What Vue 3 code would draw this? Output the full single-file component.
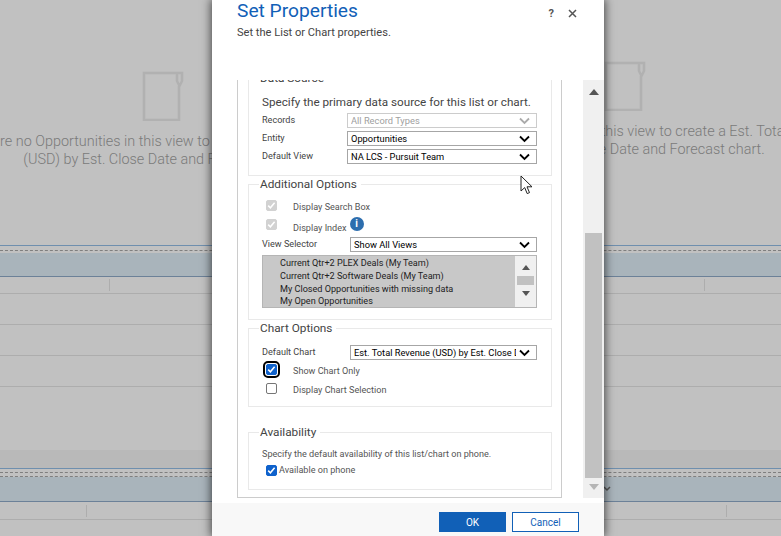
<script setup>
// Set Properties dialog over a dimmed dashboard
const views = [
  'Current Qtr+2 PLEX Deals (My Team)',
  'Current Qtr+2 Software Deals (My Team)',
  'My Closed Opportunities with missing data',
  'My Open Opportunities',
]
const sourceRows = [
  { label: 'Records', value: 'All Record Types', off: true },
  { label: 'Entity', value: 'Opportunities' },
  { label: 'Default View', value: 'NA LCS - Pursuit Team' },
]
const CHEVRON = 'M1 1.5 L5.5 6 L10 1.5'
const CHECK = 'M2.2 5.6 L4.4 7.8 L8.6 2.8'
</script>

<template>
  <div class="page">
    <div class="charts">
      <section class="empty left">
        <svg class="doc" width="42" height="50" viewBox="0 0 42 50">
          <path d="M35 2H2v47h35V15M35 2h5v8l-2.500 5-2.500-5z" />
        </svg>
        <p>There are no Opportunities in this view to create a Est. Total Revenue<br>(USD) by Est. Close Date and Forecast chart.</p>
      </section>
      <section class="empty right">
        <svg class="doc" width="42" height="50" viewBox="0 0 42 50">
          <path d="M35 2H2v47h35V15M35 2h5v8l-2.500 5-2.500-5z" />
        </svg>
        <p>There are no Opportunities in this view to create a Est. Total Revenue<br>(USD) by Est. Close Date and Forecast chart.</p>
      </section>
    </div>

    <div class="grid-head">
      <div class="dash"></div>
      <div class="band"></div>
    </div>
    <div class="row short"><i class="tick a"></i><i class="tick b"></i></div>
    <div class="row"></div>
    <div class="row"></div>
    <div class="row"></div>
    <div class="gap"></div>

    <div class="grid-head second">
      <div class="dash"></div>
      <div class="dash"></div>
      <div class="band">
        <svg width="8" height="6" viewBox="0 0 8 6"><path d="M1 1l3 3 3-3" /></svg>
      </div>
    </div>
    <div class="row last"><i class="tick c"></i><i class="tick d"></i></div>

    <div class="dialog">
      <header class="head">
        <div>
          <h1>Set Properties</h1>
          <p>Set the List or Chart properties.</p>
        </div>
        <div class="head-tools">
          <span class="help">?</span>
          <svg width="9" height="9" viewBox="0 0 9 9"><path d="M1 1l7 7M8 1L1 8" /></svg>
        </div>
      </header>

      <div class="body">
        <div class="frame">
          <div class="frame-inner">
            <fieldset class="group source">
              <legend>Data Source</legend>
              <p class="lead">Specify the primary data source for this list or chart.</p>
              <div v-for="r in sourceRows" :key="r.label" class="field">
                <label>{{ r.label }}</label>
                <div :class="['select', { off: r.off }]">
                  <span>{{ r.value }}</span>
                  <svg width="11" height="8" viewBox="0 0 11 8"><path :d="CHEVRON" /></svg>
                </div>
              </div>
            </fieldset>

            <fieldset class="group extra">
              <legend>Additional Options</legend>
              <div class="check-row first">
                <span class="box off"><svg width="11" height="11" viewBox="0 0 11 11"><path :d="CHECK" /></svg></span>
                <span class="check-label">Display Search Box</span>
              </div>
              <div class="check-row second">
                <span class="box off"><svg width="11" height="11" viewBox="0 0 11 11"><path :d="CHECK" /></svg></span>
                <span class="check-label low">Display Index</span>
                <span class="info">i</span>
              </div>
              <div class="field">
                <label>View Selector</label>
                <div class="select">
                  <span>Show All Views</span>
                  <svg width="11" height="8" viewBox="0 0 11 8"><path :d="CHEVRON" /></svg>
                </div>
              </div>
              <div class="listbox">
                <ul>
                  <li v-for="v in views" :key="v">{{ v }}</li>
                </ul>
                <div class="list-bar">
                  <i class="arrow up"></i>
                  <b></b>
                  <i class="arrow down"></i>
                </div>
              </div>
            </fieldset>

            <fieldset class="group chart">
              <legend>Chart Options</legend>
              <div class="field">
                <label>Default Chart</label>
                <div class="select">
                  <span>Est. Total Revenue (USD) by Est. Close Date</span>
                  <svg width="11" height="8" viewBox="0 0 11 8"><path :d="CHEVRON" /></svg>
                </div>
              </div>
              <div class="check-row focus-row">
                <span class="box on focus"><svg width="11" height="11" viewBox="0 0 11 11"><path :d="CHECK" /></svg></span>
                <span class="check-label">Show Chart Only</span>
              </div>
              <div class="check-row plain-row">
                <span class="box"></span>
                <span class="check-label">Display Chart Selection</span>
              </div>
            </fieldset>

            <fieldset class="group avail">
              <legend>Availability</legend>
              <p class="note">Specify the default availability of this list/chart on phone.</p>
              <div class="check-row phone-row">
                <span class="box on"><svg width="11" height="11" viewBox="0 0 11 11"><path :d="CHECK" /></svg></span>
                <span class="phone-label">Available on phone</span>
              </div>
            </fieldset>
          </div>
        </div>

        <div class="scrollbar">
          <i class="arrow up big"></i>
          <div class="thumb"></div>
          <i class="arrow down big pale"></i>
        </div>
      </div>

      <footer class="foot">
        <button class="btn primary">OK</button>
        <button class="btn">Cancel</button>
      </footer>
    </div>

    <svg class="cursor" width="14" height="20" viewBox="0 0 14 20">
      <path d="M1 1v15l3.700-3.400 2.500 6 2.300-1-2.500-5.800h5z" />
    </svg>
  </div>
</template>

<style scoped>
.page {
  position: relative;
  width: 781px; height: 536px; overflow: hidden;
  background: #c1c1c1;
  font-family: Roboto, "Liberation Sans", sans-serif;
}

/* dimmed page behind the dialog */
.charts { display: grid; grid-template-columns: 326px 312px; justify-content: space-between; height: 245px; }
.empty { display: flex; flex-direction: column; align-items: center; min-width: 0; }
.empty.left { padding-top: 71px; }
.empty.right { padding-top: 61px; }
.empty p {
  margin: 12px 0 0; white-space: nowrap; text-align: center; text-indent: 10px;
  font-size: 14.400px; line-height: 18px; font-weight: 300; color: #7a7a7a;
}
.doc path { fill: none; stroke: #b1b1b1; stroke-width: 2.500; }

.grid-head { border-top: 1px solid #6f8fae; }
.dash { border-top: 1px dashed #7f7f7f; margin-top: 4px; }
.band { height: 23px; margin-top: 2px; background: #a9b4bb; border-bottom: 1px solid #6c8198; }
.second .dash { margin-top: 3px; }
.second .band { height: 24px; margin-top: 0; display: flex; align-items: center; padding-left: 603px; }
.band path { fill: none; stroke: #555; stroke-width: 1.500; }
.row { height: 31px; border-bottom: 1px solid #adadad; box-sizing: border-box; display: flex; align-items: center; }
.row.short { height: 17px; }
.row.last { height: 18px; }
.gap { height: 81px; box-sizing: border-box; border-bottom: 18px solid #b9b9b9; }
.tick { width: 1px; height: 12px; background: #adadad; }
.tick.a { margin-left: 109px; }
.tick.b { margin-left: auto; margin-right: 76px; }
.tick.c { margin-left: 86px; }
.tick.d { margin-left: auto; margin-right: 54px; }

/* dialog */
.dialog {
  position: absolute; left: 212px; top: 0;
  width: 392px; height: 536px;
  display: flex; flex-direction: column;
  background: #fff;
  box-shadow: 0 0 9px 1px rgba(0,0,0,.65);
}
.head { height: 80px; flex: none; display: flex; justify-content: space-between; padding-left: 25px; box-sizing: border-box; }
.head h1 { margin: -3px 0 0; font-size: 19.200px; line-height: 28px; font-weight: 400; color: #1160b7; }
.head p { margin: 1px 0 0; font-size: 11.100px; line-height: 14px; color: #444; }
.head-tools { display: flex; gap: 14px; align-items: center; height: 27px; padding-right: 27px; }
.help { font-size: 11px; font-weight: 700; color: #555; line-height: 1; }
.head-tools path { stroke: #555; stroke-width: 1.500; fill: none; }

.body { height: 418px; flex: none; display: flex; justify-content: space-between; padding-left: 25px; }
.frame { width: 325px; box-sizing: border-box; border: 1px solid #ccc; border-top: 0; overflow: hidden; }
.frame-inner { margin-top: -10px; padding-left: 10px; }

.group {
  width: 304px; box-sizing: border-box; margin: 0; padding: 0 13px;
  border: 1px solid #e9e9e9;
  min-inline-size: 0;
}
.group legend { margin-left: -3px; padding: 0 4px 0 1px; font-size: 11.800px; line-height: 16px; color: #444; }
.source { height: 106px; }
.extra { height: 144px; }
.chart { height: 87px; }
.avail { height: 66px; margin-top: 17px; }

.lead { margin: 8px 0 3px; font-size: 11.700px; line-height: 16px; color: #444; white-space: nowrap; }
.field { display: grid; grid-template-columns: 88px 187px; align-items: center; height: 15px; margin-bottom: 3px; }
.source .field { grid-template-columns: 85px 190px; }
.field label { font-size: 9.100px; color: #444; line-height: 15px; }
.select {
  height: 15px; box-sizing: border-box; border: 1px solid #a6a6a6; background: #fff;
  display: flex; align-items: center; justify-content: space-between; gap: 3px;
  padding: 0 6px 0 3px;
  font-size: 9.300px; color: #000; white-space: nowrap; overflow: hidden;
}
.select span { overflow: hidden; min-width: 0; flex: 1; }
.select svg { flex: none; }
.select path { fill: none; stroke: #000; stroke-width: 1.800; }
.select.off { color: #a0a0a0; border-color: #ccc; }
.select.off path { stroke: #aaa; }

.check-row { display: flex; align-items: flex-start; }
.box {
  width: 11px; height: 11px; box-sizing: border-box; flex: none;
  margin: 1px 16px 0 4px;
  border: 1px solid #767676; border-radius: 2px; background: #fff;
  display: flex;
}
.box svg { margin: -1px; flex: none; }
.box path { fill: none; stroke: #fff; stroke-width: 1.500; }
.box.off { background: #d2d2d2; border-color: #d2d2d2; }
.box.on { background: #0f62cc; border-color: #0f62cc; }
.box.focus { outline: 2px solid #000; outline-offset: 1px; border-radius: 2px; }
.check-label { font-size: 9.100px; line-height: 16px; color: #555; }
.check-label.low { margin-top: 2px; }
.info {
  width: 14px; height: 14px; border-radius: 50%; margin: -1px 0 0 3px;
  background: #2d6eae; color: #fff; font-size: 10px; line-height: 14px; font-weight: 700; text-align: center;
}
.check-row.first { margin-top: 7px; height: 19px; }
.check-row.second { height: 19px; }
.listbox {
  width: 275px; height: 53px; box-sizing: border-box; margin-top: 1px;
  border: 1px solid #b5b5b5; background: #c8c8c8; display: flex; justify-content: space-between;
}
.listbox ul { list-style: none; margin: 0; padding: 1px 0 0 17px; font-size: 9.100px; line-height: 12.800px; color: #222; white-space: nowrap; }
.list-bar { width: 21px; background: #f0f0f0; display: flex; flex-direction: column; align-items: center; padding-top: 9px; box-sizing: border-box; }
.list-bar b { width: 17px; height: 9px; background: #c1c1c1; margin: 6px 0; }
.arrow { display: block; width: 0; height: 0; border-left: 4.500px solid transparent; border-right: 4.500px solid transparent; }
.arrow.up { border-bottom: 5px solid #555; }
.arrow.down { border-top: 5px solid #555; }

.chart .field { margin: 9px 0 2px; }
.focus-row { height: 18px; }
.focus-row .box { margin-top: 2px; }
.focus-row .check-label { margin-top: 1px; }
.plain-row { height: 18px; }
.plain-row .box { margin-top: 3px; }
.plain-row .check-label { margin-top: 2px; }

.note { margin: 6px 0 2px; font-size: 9.100px; line-height: 16px; color: #555; }
.phone-row .box { margin: 1px 2px 0 4px; }
.phone-label { font-size: 9.100px; line-height: 12px; color: #555; }

.scrollbar {
  width: 21px; background: #f0f0f0; display: flex; flex-direction: column; align-items: center;
  padding-top: 9px; box-sizing: border-box;
}
.arrow.big.up { border-left-width: 5px; border-right-width: 5px; border-bottom: 6px solid #555; }
.arrow.big.down { border-left-width: 5px; border-right-width: 5px; border-top: 6px solid #b5b5b5; }
.thumb { width: 17px; height: 245px; background: #c1c1c1; margin: 138px 0 6px; }

.foot {
  flex: none; height: 33px; margin-top: 5px; background: #f8f8f8;
  display: flex; justify-content: flex-end; gap: 6px; padding: 9px 25px 0 0; box-sizing: border-box;
}
.btn {
  width: 67px; height: 20px; box-sizing: border-box; border: 1px solid #1160b7; background: #fff;
  font: 400 10px Roboto, "Liberation Sans", sans-serif; color: #1160b7; padding: 0;
}
.btn.primary { background: #1160b7; color: #fff; }

.cursor { position: absolute; left: 520px; top: 175px; }
.cursor path { fill: #fff; stroke: #222; stroke-width: 1; }
</style>

<style>
body { margin: 0; }
</style>
